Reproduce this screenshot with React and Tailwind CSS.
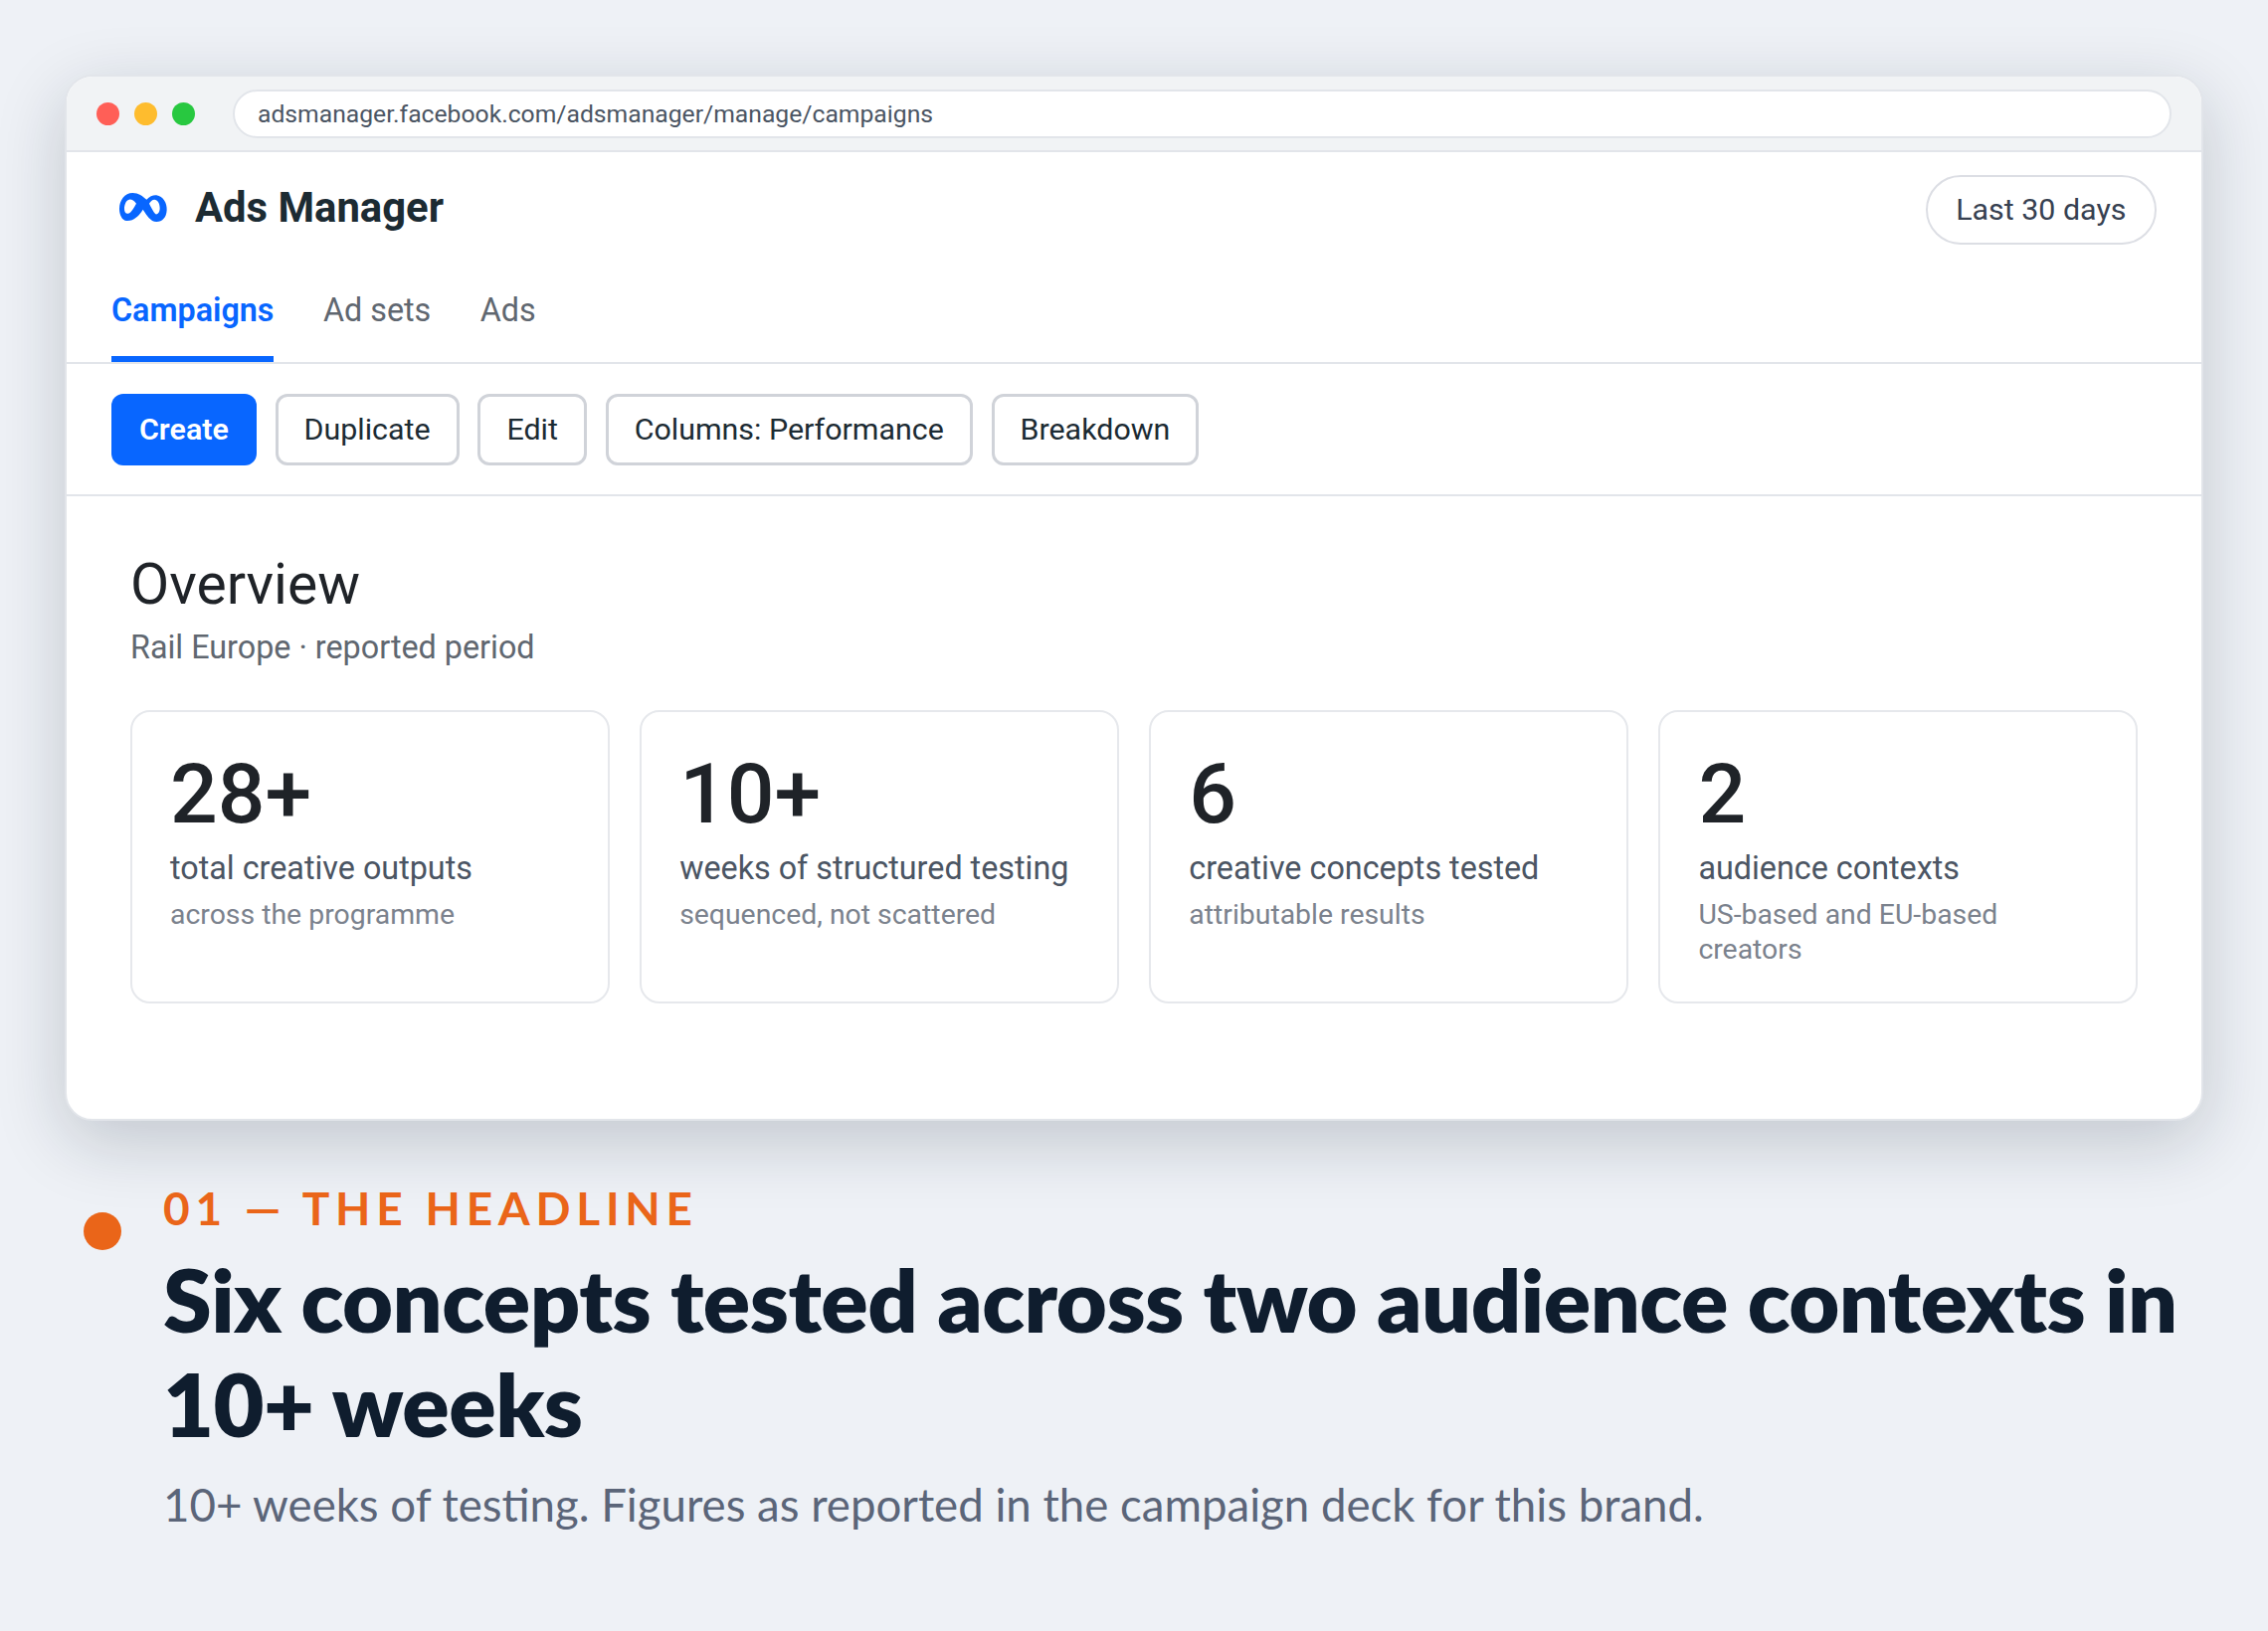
const roboto = { fontFamily: "Roboto, sans-serif" };

function Btn({ children }) {
  return (
    <button className="h-[72px] px-[26px] pt-[1px] rounded-[12px] border-[3px] border-[#d0d3d9] bg-white text-[#1c2b33] text-[30.4px] leading-none whitespace-nowrap">
      {children}
    </button>
  );
}

function Card({ n, label, sub }) {
  return (
    <div className="border-[2px] border-[#e6e8ec] rounded-[20px] bg-white px-[38px] pt-[36px] pb-[30px]">
      <div className="text-[84px] leading-[94px] font-medium text-[#1f2328]">{n}</div>
      <div className="mt-[5px] text-[32.3px] leading-[44px] text-[#4b5563]">{label}</div>
      <div className="mt-[8px] text-[28.4px] leading-[34.5px] text-[#7b828d]">{sub}</div>
    </div>
  );
}

export default function App() {
  return (
    <div className="w-[2280px] h-[1640px] bg-[#eef1f6] overflow-hidden flex flex-col" style={{ ...roboto }}>
      <div className="mx-[65px] mt-[75px] h-[1052px] shrink-0 flex flex-col bg-white rounded-[28px] border-[2px] border-[#e2e5ea] overflow-hidden shadow-[0_20px_70px_rgba(15,29,46,0.2)]">
        <div className="h-[76px] shrink-0 bg-[#f1f3f5] border-b-[2px] border-[#e2e5ea] flex items-center pl-[30px] pr-[30px]">
          <div className="flex gap-[15px]">
            <span className="w-[23px] h-[23px] rounded-full bg-[#ff5f57]" />
            <span className="w-[23px] h-[23px] rounded-full bg-[#febc2e]" />
            <span className="w-[23px] h-[23px] rounded-full bg-[#28c840]" />
          </div>
          <div className="ml-[38px] flex-1 h-[49px] pt-[1px] rounded-full bg-white border-[2px] border-[#e2e5ea] flex items-center px-[23px] text-[24.7px] text-[#4b5563]">
            adsmanager.facebook.com/adsmanager/manage/campaigns
          </div>
        </div>
        <div className="flex items-start justify-between pl-[45px] pr-[45px] pt-[23px]">
          <div className="flex items-center h-[67px]">
            <svg width="60" height="40" viewBox="0 0 180 120" className="ml-[2px] mb-[3px]">
              <path
                fillRule="evenodd"
                fill="#0866ff"
                d="M18 66C18 40 34 18 58 18C76 18 88 28 100 38C110 28 120 24 130 25C150 28 162 48 161 70C160 92 148 105 130 105C112 105 100 84 89 68C78 86 62 103 40 102C26 101 18 84 18 66ZM33 66C33 76 38 82 45 80C54 78 62 62 69 50C62 41 55 37 48 38C39 39 33 52 33 66ZM108 50C114 62 120 74 127 82C134 84 140 76 140 64C140 50 133 38 124 38C117 38 112 43 108 50Z"
              />
            </svg>
            <span className="ml-[22px] text-[41.8px] font-bold text-[#1c2b33] whitespace-nowrap">Ads Manager</span>
          </div>
          <div className="h-[70px] px-[28.5px] rounded-full border-[2px] border-[#dcdee4] flex items-center text-[30.4px] text-[#374151]">Last 30 days</div>
        </div>
        <div className="flex gap-[49.5px] px-[45px] mt-[28px] border-b-[2px] border-[#e2e5ea] h-[92px]">
          <div className="h-[90px] border-b-[6px] border-[#0866ff] text-[#0866ff] text-[32.3px] font-semibold leading-[76px]">Campaigns</div>
          <div className="text-[#606770] text-[32.3px] leading-[76px]">Ad sets</div>
          <div className="text-[#606770] text-[32.3px] leading-[76px]">Ads</div>
        </div>
        <div className="h-[133px] shrink-0 border-b-[2px] border-[#e2e5ea] flex items-center gap-[18.8px] px-[45px]">
          <button className="h-[72px] px-[28px] pt-[1px] rounded-[12px] bg-[#0866ff] text-white text-[30.4px] font-semibold leading-none">Create</button>
          <Btn>Duplicate</Btn>
          <Btn>Edit</Btn>
          <Btn>Columns: Performance</Btn>
          <Btn>Breakdown</Btn>
        </div>
        <div className="px-[64px] pt-[57px]">
          <div className="text-[57px] leading-[64px] text-[#1f2328]">Overview</div>
          <div className="mt-[10px] text-[32.3px] leading-[42px] text-[#606770]">Rail Europe · reported period</div>
          <div className="mt-[42px] grid grid-cols-4 gap-[30.5px] h-[295px]">
            <Card n="28+" label="total creative outputs" sub="across the programme" />
            <Card n="10+" label="weeks of structured testing" sub="sequenced, not scattered" />
            <Card n="6" label="creative concepts tested" sub="attributable results" />
            <Card n="2" label="audience contexts" sub="US-based and EU-based creators" />
          </div>
        </div>
      </div>
      <div className="flex mt-[60px] ml-[84px] mr-[26px]" style={{ fontFamily: "Lato, sans-serif" }}>
        <span className="w-[38px] h-[38px] mt-[32px] shrink-0 rounded-full bg-[#ea6519]" />
        <div className="ml-[42px]">
          <div className="text-[46px] leading-[56px] font-bold tracking-[0.125em] text-[#ea6519]">01 — THE HEADLINE</div>
          <div className="mt-[11px] text-[88px] leading-[105px] font-extrabold tracking-[-0.5px] text-[#0f1d2e]">Six concepts tested across two audience contexts in 10+ weeks</div>
          <div className="mt-[19px] text-[45.6px] leading-[60px] text-[#5b6579]">10+ weeks of testing. Figures as reported in the campaign deck for this brand.</div>
        </div>
      </div>
    </div>
  );
}
